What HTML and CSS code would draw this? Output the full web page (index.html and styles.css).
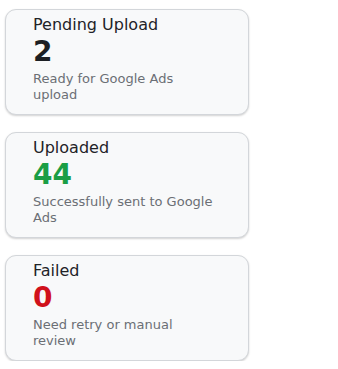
FILE: index.html
```html
<!DOCTYPE html>
<html>
<head>
<meta charset="utf-8">
<link rel="stylesheet" href="styles.css">
</head>
<body>
<div class="stack">
  <div class="card">
    <div class="title">Pending Upload</div>
    <div class="value value-neutral">2</div>
    <div class="desc">Ready for Google Ads upload</div>
  </div>
  <div class="card">
    <div class="title">Uploaded</div>
    <div class="value value-success">44</div>
    <div class="desc">Successfully sent to Google Ads</div>
  </div>
  <div class="card">
    <div class="title">Failed</div>
    <div class="value value-danger">0</div>
    <div class="desc">Need retry or manual review</div>
  </div>
</div>
</body>
</html>
```
FILE: styles.css
```css
html, body {
  margin: 0;
  padding: 0;
  background: #ffffff;
}
body {
  font-family: "DejaVu Sans", "Open Sans", sans-serif;
}
.stack {
  display: flex;
  flex-direction: column;
  gap: 17px;
  padding: 9px 0 0 5px;
}
.card {
  box-sizing: border-box;
  width: 244px;
  height: 106px;
  background: #f8f9fa;
  border: 1px solid #d3d6da;
  border-radius: 11px;
  box-shadow: 0 1px 2px rgba(0, 0, 0, 0.18);
  padding: 5px 31px 0 27px;
}
.title {
  font-size: 16px;
  line-height: 20px;
  color: #1f2328;
}
.value {
  font-size: 28px;
  font-weight: bold;
  line-height: 30px;
  margin-top: 2px;
}
.value-neutral { color: #1c1f24; }
.value-success { color: #1a9e45; }
.value-danger { color: #d0111b; }
.desc {
  font-size: 13px;
  line-height: 16px;
  color: #6b6f75;
  margin-top: 4px;
}
```
